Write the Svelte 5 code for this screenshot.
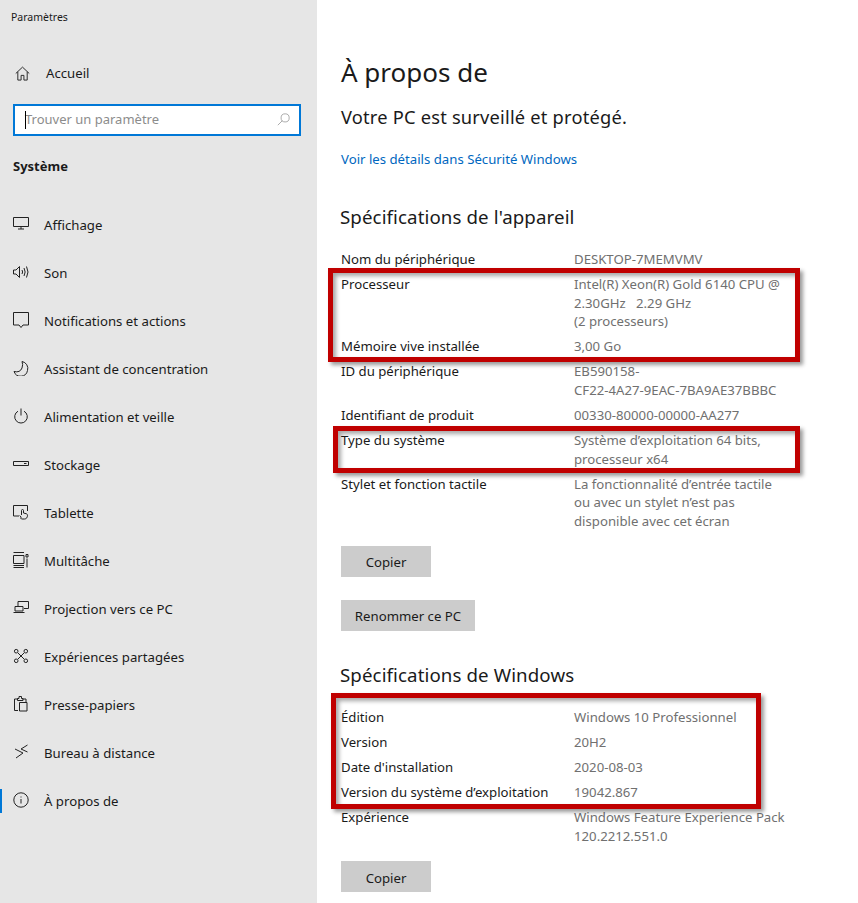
<script>
  const nav = [
    { label: "Affichage", d: "M.5 1.500h15v9H.5zM8 10.500v2.500M5 13h6" },
    { label: "Son", d: "M.5 6v4h2.500L6.500 13.500V2.500L3 6zM9 6q1.200 2 0 4M11 4q2.300 4 0 8M13.500 2.500q3 5.500 0 11" },
    { label: "Notifications et actions", d: "M.5 .5h15v12.500h-5.500L8 15.500 6 13H.5z" },
    { label: "Assistant de concentration", d: "M9 1.500a7 7 0 0 1 5.500 9A7 7 0 0 1 1 11.500q6 1.500 8-3.500q1.300-3.500 0-6.500z" },
    { label: "Alimentation et veille", d: "M8 .5v7M5 3.200a6.300 6.300 0 1 0 6 0" },
    { label: "Stockage", d: "M.5 5.500h15v4H.5zM11 7.500h2.500" },
    { label: "Tablette", d: "M6 12H.5V1.500h14V7M8 15v-2L6.700 11.500M8.500 11V6.500a1 1 0 0 1 2 0V9l3 .800q1 .500 1 1.500c0 2-1 3.700-3 3.700H8.500" },
    { label: "Multitâche", d: "M.5 .5H11M.5 15.500H11M.5 13.500H11M.5 3.500H11v8H.5zM14 6.500v9M13 2.500h2V5h-2z" },
    { label: "Projection vers ce PC", d: "M5 6V1.500h10.500v7H11M2 6.500h8V11H2zM.5 12.500h11" },
    { label: "Expériences partagées", d: "M5 5l6 6M11 5l-6 6M5 3.200a1.800 1.800 0 1 1-3.600 0a1.800 1.800 0 0 1 3.600 0zM14.600 3.200a1.800 1.800 0 1 1-3.600 0a1.800 1.800 0 0 1 3.600 0zM5 12.800a1.800 1.800 0 1 1-3.600 0a1.800 1.800 0 0 1 3.600 0zM14.600 12.800a1.800 1.800 0 1 1-3.600 0a1.800 1.800 0 0 1 3.600 0z" },
    { label: "Presse-papiers", d: "M5 14.500H1.500V3H5M9.500 3H13v3M4.500 4.500V2.500H6V.5h2.500v2H10v2zM6.500 6.500H14v8.500H6.500z" },
    { label: "Bureau à distance", d: "M2 5l8 4-7 5M14.500 1L8 5l6.500 3" },
    { label: "À propos de", d: "M8 .8a7.200 7.200 0 1 0 0 14.400A7.200 7.200 0 0 0 8 .8zM8 7v4.500M8 4.500v1", active: true }
  ];

  const device = [
    ["Nom du périphérique", ["DESKTOP-7MEMVMV"]],
    ["Processeur", ["Intel(R) Xeon(R) Gold 6140 CPU @", "2.30GHz\u00a0\u00a0 2.29 GHz", "(2 processeurs)"]],
    ["Mémoire vive installée", ["3,00 Go"]],
    ["ID du périphérique", ["EB590158-", "CF22-4A27-9EAC-7BA9AE37BBBC"]],
    ["Identifiant de produit", ["00330-80000-00000-AA277"]],
    ["Type du système", ["Système d’exploitation 64 bits,", "processeur x64"]],
    ["Stylet et fonction tactile", ["La fonctionnalité d’entrée tactile", "ou avec un stylet n’est pas", "disponible avec cet écran"]]
  ];

  const windows = [
    ["Édition", ["Windows 10 Professionnel"]],
    ["Version", ["20H2"]],
    ["Date d'installation", ["2020-08-03"]],
    ["Version du système d’exploitation", ["19042.867"]],
    ["Expérience", ["Windows Feature Experience Pack", "120.2212.551.0"]]
  ];

  // the three red annotation frames drawn over the screenshot
  const frames = [
    { x: 328, y: 268, w: 472, h: 94 },
    { x: 333, y: 426, w: 467, h: 47 },
    { x: 331, y: 693, w: 430, h: 116 }
  ];
</script>

{#snippet specs(rows)}
  <div class="specs">
    {#each rows as [name, lines]}
      <div class="name">{name}</div>
      <div class="value">
        {#each lines as line}
          <div>{line}</div>
        {/each}
      </div>
    {/each}
  </div>
{/snippet}

<div class="window">
  <aside>
    <div class="title">Paramètres</div>
    <div class="home">
      <svg viewBox="0 0 16 16"><path d="M.8 8L8 1.200 15.200 8M3 6.200V15h3.500v-5h3v5H13V6.200" /></svg>
      <span>Accueil</span>
    </div>
    <div class="search">
      <i class="caret"></i>
      <span>Trouver un paramètre</span>
      <svg viewBox="0 0 16 16"><path d="M6.500 9.500L1 15M10 1a5 5 0 1 0 0 10a5 5 0 0 0 0-10z" /></svg>
    </div>
    <div class="group">Système</div>
    <nav>
      {#each nav as item}
        <div class="item" class:active={item.active}>
          <svg viewBox="0 0 16 16"><path d={item.d} /></svg>
          <span>{item.label}</span>
        </div>
      {/each}
    </nav>
  </aside>

  <main>
    <h1>À propos de</h1>
    <p class="status">Votre PC est surveillé et protégé.</p>
    <div class="link">Voir les détails dans Sécurité Windows</div>

    <h2 class="first">Spécifications de l'appareil</h2>
    {@render specs(device)}
    <button class="copy">Copier</button>
    <button class="rename">Renommer ce PC</button>

    <h2 class="second">Spécifications de Windows</h2>
    {@render specs(windows)}
    <button class="copy last">Copier</button>
  </main>

  {#each frames as f}
    <div class="frame" style="left:{f.x}px;top:{f.y}px;width:{f.w}px;height:{f.h}px"></div>
  {/each}
</div>

<style>
  :global(body) {
    margin: 0;
    background: #fff;
  }
  * {
    box-sizing: border-box;
  }
  .window {
    position: relative;
    display: flex;
    width: 858px;
    height: 903px;
    overflow: hidden;
    font-family: "Noto Sans", "Open Sans", sans-serif;
    font-size: 13.200px;
    color: #1a1a1a;
  }
  aside {
    flex: 0 0 317px;
    background: #e6e6e6;
  }
  .title {
    padding: 10px 0 0 11px;
    height: 54px;
    font-size: 10.500px;
    line-height: 14px;
  }
  .home {
    display: flex;
    align-items: center;
    gap: 16px;
    height: 38px;
    padding-left: 15px;
  }
  .home svg {
    width: 15px;
    height: 15px;
    flex: none;
  }
  svg {
    fill: none;
    stroke: #222;
    stroke-width: 1;
  }
  .search {
    position: relative;
    display: flex;
    align-items: center;
    justify-content: space-between;
    width: 288px;
    height: 32px;
    margin: 12px 0 0 13px;
    padding: 0 9px 2px 10px;
    background: #fff;
    border: 2px solid #0078d7;
    color: #8c8c8c;
    font-size: 13px;
  }
  .search svg {
    width: 13px;
    height: 13px;
    stroke: #999;
  }
  .caret {
    position: absolute;
    left: 10px;
    top: 5px;
    width: 1px;
    height: 18px;
    background: #000;
  }
  .group {
    margin: 20px 0 0 13px;
    height: 45px;
    line-height: 20px;
    font-size: 13px;
    font-weight: 700;
  }
  .item {
    position: relative;
    display: flex;
    align-items: center;
    gap: 15px;
    height: 48px;
    padding-left: 13px;
  }
  .item svg {
    width: 16px;
    height: 16px;
    flex: none;
    margin-top: -2px;
  }
  .item.active::before {
    content: "";
    position: absolute;
    left: 0;
    top: 12px;
    width: 2px;
    height: 24px;
    background: #0078d7;
  }
  main {
    flex: 1;
    padding-left: 24px;
  }
  h1 {
    margin: 52px 0 0;
    font-size: 26px;
    line-height: 40px;
    font-weight: 400;
  }
  .status {
    margin: 12px 0 0;
    font-size: 18.300px;
    line-height: 26px;
    letter-spacing: 0.2px;
  }
  .link {
    margin-top: 19px;
    line-height: 20px;
    color: #0067c0;
  }
  h2 {
    margin: 0 0 0 -1px;
    font-size: 18.700px;
    line-height: 26px;
    font-weight: 400;
    letter-spacing: 0.1px;
  }
  h2.first {
    margin-top: 35px;
  }
  h2.second {
    margin-top: 31px;
  }
  .specs {
    display: grid;
    grid-template-columns: 233px 1fr;
    row-gap: 6.330px;
    margin-top: 20px;
    line-height: 18.670px;
  }
  h2.second + .specs {
    margin-top: 20.500px;
  }
  .value {
    color: #707070;
  }
  button {
    display: block;
    height: 31px;
    border: 0;
    padding: 2px 0 0;
    background: #cccccc;
    font: inherit;
    color: inherit;
  }
  .copy {
    width: 90px;
    margin-top: 15px;
  }
  .rename {
    width: 134px;
    margin-top: 23px;
  }
  .copy.last {
    margin-top: 15.500px;
  }
  .frame {
    position: absolute;
    border: 5px solid #c00000;
    box-shadow: 3px 3px 4px rgba(0, 0, 0, 0.4), inset 3px 3px 4px rgba(0, 0, 0, 0.35);
  }
</style>
